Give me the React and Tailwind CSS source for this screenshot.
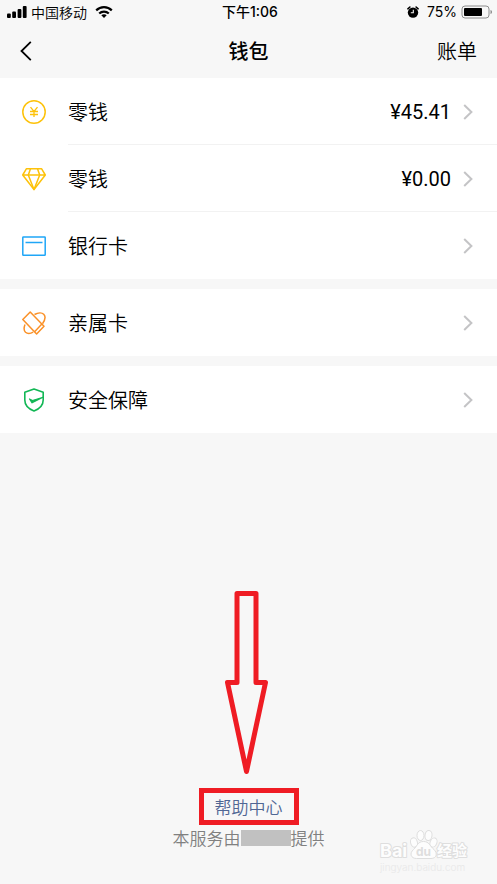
import React from "react";

function SignalIcon() {
  return (
    <svg className="h-3 w-5" viewBox="0 0 20 12" aria-hidden="true">
      <rect x="0" y="7.500" width="3.800" height="4.500" rx="1" />
      <rect x="5.200" y="5.500" width="3.800" height="6.500" rx="1" />
      <rect x="10.600" y="3" width="3.800" height="9" rx="1" />
      <rect x="15.800" y="0" width="3.800" height="12" rx="1" />
    </svg>
  );
}

function WifiIcon() {
  return (
    <svg className="h-3 w-[18px]" viewBox="0 0 18 12" fill="none" stroke="#000" strokeWidth="2.200" aria-hidden="true">
      <path d="M1.200 4.400C5.500 .1 12.500 .1 16.800 4.400" />
      <path d="M4.200 7.500C6.900 4.900 11.100 4.900 13.800 7.500" />
      <path d="M9 12 6.300 9.300C7.800 7.900 10.200 7.900 11.700 9.300Z" fill="#000" stroke="none" />
    </svg>
  );
}

function AlarmIcon() {
  return (
    <svg className="size-3" viewBox="0 0 12 12" fill="none" aria-hidden="true">
      <circle cx="6" cy="6.600" r="5.200" fill="#000" />
      <path d="M.9 2.800 2.900 1M11.100 2.800 9.100 1" stroke="#000" strokeWidth="1.600" strokeLinecap="round" />
      <path d="M6.300 3.800v3H3.800" stroke="#f7f7f7" strokeWidth="1.100" />
    </svg>
  );
}

function BatteryIcon() {
  return (
    <svg className="h-[14px] w-8" viewBox="0 0 32 14" fill="none" aria-hidden="true">
      <rect x="1" y="1" width="27" height="12" rx="3" stroke="#8c8c8c" />
      <rect x="3" y="3" width="18" height="8" rx="1" fill="#000" />
      <path d="M29.500 5c2 .6 2 3.400 0 4z" fill="#8c8c8c" />
    </svg>
  );
}

function CoinIcon() {
  return (
    <svg className="size-6" viewBox="0 0 24 24" fill="none" stroke="#fdc20a" strokeWidth="1.500" aria-hidden="true">
      <circle cx="12" cy="12" r="11.200" />
      <path d="M8.500 7.200 12 11.500l3.500-4.300M12 11.500v5.500M8 11.500h8M8 14.500h8" strokeWidth="1.300" />
    </svg>
  );
}

function DiamondIcon() {
  return (
    <svg className="size-6" viewBox="0 0 24 24" fill="none" stroke="#fdc20a" strokeWidth="1.500" strokeLinejoin="round" aria-hidden="true">
      <path d="M4.500 1.700h15L23.300 8 12 22.500.7 8zM.7 8h22.600" />
      <path d="M8.500 1.700 6.300 8 12 22.500 17.700 8l-2.200-6.300" />
    </svg>
  );
}

function BankCardIcon() {
  return (
    <svg className="size-6" viewBox="0 0 24 24" fill="none" stroke="#1fa6f7" strokeWidth="1.500" aria-hidden="true">
      <rect x=".8" y="3" width="22.400" height="18.300" rx=".6" />
      <path d="M3.500 8.500h17" />
    </svg>
  );
}

function FamilyCardIcon() {
  return (
    <svg className="size-6" viewBox="0 0 24 24" fill="none" stroke="#fa9128" strokeWidth="1.500" strokeLinejoin="round" aria-hidden="true">
      <path d="M.8 8.500 8.200 1 22 15.200 14.600 22.900z" />
      <path d="M12.600 20.800 19.900 13.100" />
      <path d="M12.500 3.500C16 1.500 20 1.400 21.700 3.200c1.900 2 1.300 6-1.200 9.500" />
      <path d="M3 13.500C1.800 16.700 1.900 19.700 3.500 21.200c1.800 1.600 4.700 1.600 7.700 0" />
    </svg>
  );
}

function ShieldIcon() {
  return (
    <svg className="size-6" viewBox="0 0 24 24" fill="none" stroke="#12b755" strokeWidth="1.600" strokeLinejoin="round" aria-hidden="true">
      <path d="M12 1 21.200 4.200V12c0 5-3.500 8.800-9.200 11C6.300 20.800 2.800 17 2.800 12V4.200z" />
      <path d="m7.500 11 2.600 3.800L21 9.200l-10.500 3.300z" fill="#12b755" strokeWidth="1.200" />
    </svg>
  );
}

function Chevron() {
  return (
    <svg className="h-4 w-[10px]" viewBox="0 0 10 16" fill="none" stroke="#c4c4c6" strokeWidth="2" aria-hidden="true">
      <path d="m1.200 1 7.200 7-7.200 7" />
    </svg>
  );
}

function Row({ icon, label, amount, divided }) {
  return (
    <button type="button" className="flex h-[67px] w-full items-stretch bg-white pl-[22px] text-left">
      <span className="flex w-[46px] shrink-0 items-center">{icon}</span>
      <span
        className={
          divided
            ? "flex flex-1 items-center pr-6 shadow-[inset_0_-1px_#f2f2f2]"
            : "flex flex-1 items-center pr-6"
        }
      >
        <span className="flex-1 text-xl text-black">{label}</span>
        {amount && (
          <span className="mr-3 font-[Roboto,'Noto_Sans_CJK_SC',sans-serif] text-xl font-normal text-black">{amount}</span>
        )}
        <Chevron />
      </span>
    </button>
  );
}

function ArrowDown() {
  return (
    <svg className="h-[186px] w-12" viewBox="0 0 48 186" fill="none" stroke="#ef1c24" strokeWidth="5" strokeLinejoin="round" aria-hidden="true">
      <path d="M12 3.500h19v89H40.500L21.500 181.500 2.500 92.500H12z" />
    </svg>
  );
}

function Watermark() {
  return (
    <svg
      className="absolute right-6 bottom-2 h-12 w-[94px] font-[Inter,'Noto_Sans_CJK_SC',sans-serif]"
      viewBox="0 0 94 48"
      fill="#fdfdfd"
      stroke="#dedede"
      aria-hidden="true"
    >
      <g strokeWidth="1">
        <ellipse cx="35" cy="14.500" rx="3.400" ry="4.700" transform="rotate(-15 35 14.500)" />
        <ellipse cx="41.500" cy="7.500" rx="3.500" ry="5" />
        <ellipse cx="49.500" cy="7.500" rx="3.500" ry="5" transform="rotate(8 49.500 7.500)" />
        <ellipse cx="54.500" cy="14.500" rx="3.400" ry="4.700" transform="rotate(20 54.500 14.500)" />
        <path d="M44.500 13.500c-6 0-6 4.500-10 8-4.500 4-2.500 9 3 9h14.500c5.500 0 7-5 3-9-4.500-3.500-4.500-8-10.500-8z" />
      </g>
      <g strokeWidth="2" fontWeight="700" paintOrder="stroke" strokeLinejoin="round">
        <text x="1" y="29" fontSize="18">Bai</text>
        <text x="37" y="28" fontSize="12" fill="#dedede" stroke="none">du</text>
        <text x="58" y="28" fontSize="15">经验</text>
      </g>
      <text x="1" y="43" fontSize="10" fill="#e8e8e8" stroke="none">jingyan.baidu.com</text>
    </svg>
  );
}

export default function App() {
  return (
    <div className="relative flex min-h-screen flex-col bg-[#f7f7f7] font-['Noto_Sans_CJK_SC',sans-serif] font-[350] text-black">
      <div className="grid h-6 grid-cols-3 items-center pr-1 pl-[7px] text-sm">
        <div className="flex items-center gap-1">
          <SignalIcon />
          <span className="mr-1">中国移动</span>
          <WifiIcon />
        </div>
        <div className="text-center font-[Inter,'Noto_Sans_CJK_SC',sans-serif] font-medium">下午1:06</div>
        <div className="flex items-center justify-end font-[Inter,'Noto_Sans_CJK_SC',sans-serif] font-normal">
          <AlarmIcon />
          <span className="mr-1 ml-2">75%</span>
          <BatteryIcon />
        </div>
      </div>

      <header className="grid h-[54px] grid-cols-3 items-center px-5">
        <button type="button" aria-label="返回" className="justify-self-start">
          <svg className="h-5 w-3" viewBox="0 0 12 20" fill="none" stroke="#000" strokeWidth="1.800" aria-hidden="true">
            <path d="M10.800.8 1.500 10l9.300 9.200" />
          </svg>
        </button>
        <h1 className="text-center text-xl font-medium">钱包</h1>
        <button type="button" className="justify-self-end text-xl">账单</button>
      </header>

      <main className="flex flex-col gap-[10px]">
        <section>
          <Row icon={<CoinIcon />} label="零钱" amount="¥45.41" divided />
          <Row icon={<DiamondIcon />} label="零钱" amount="¥0.00" divided />
          <Row icon={<BankCardIcon />} label="银行卡" />
        </section>
        <section>
          <Row icon={<FamilyCardIcon />} label="亲属卡" />
        </section>
        <section>
          <Row icon={<ShieldIcon />} label="安全保障" />
        </section>
      </main>

      <footer className="mt-auto flex flex-col items-center pb-[34px]">
        <ArrowDown />
        <a href="#help" className="mt-3 border-[5px] border-[#ef1c24] px-[11px] text-[17px] leading-[27px] text-[#506694]">
          帮助中心
        </a>
        <p className="flex items-center text-[17px] leading-[25px] text-[#808080]">
          本服务由
          <span className="h-4 w-[50px] bg-[#c1c1c1]" />
          提供
        </p>
      </footer>

      <Watermark />
    </div>
  );
}
